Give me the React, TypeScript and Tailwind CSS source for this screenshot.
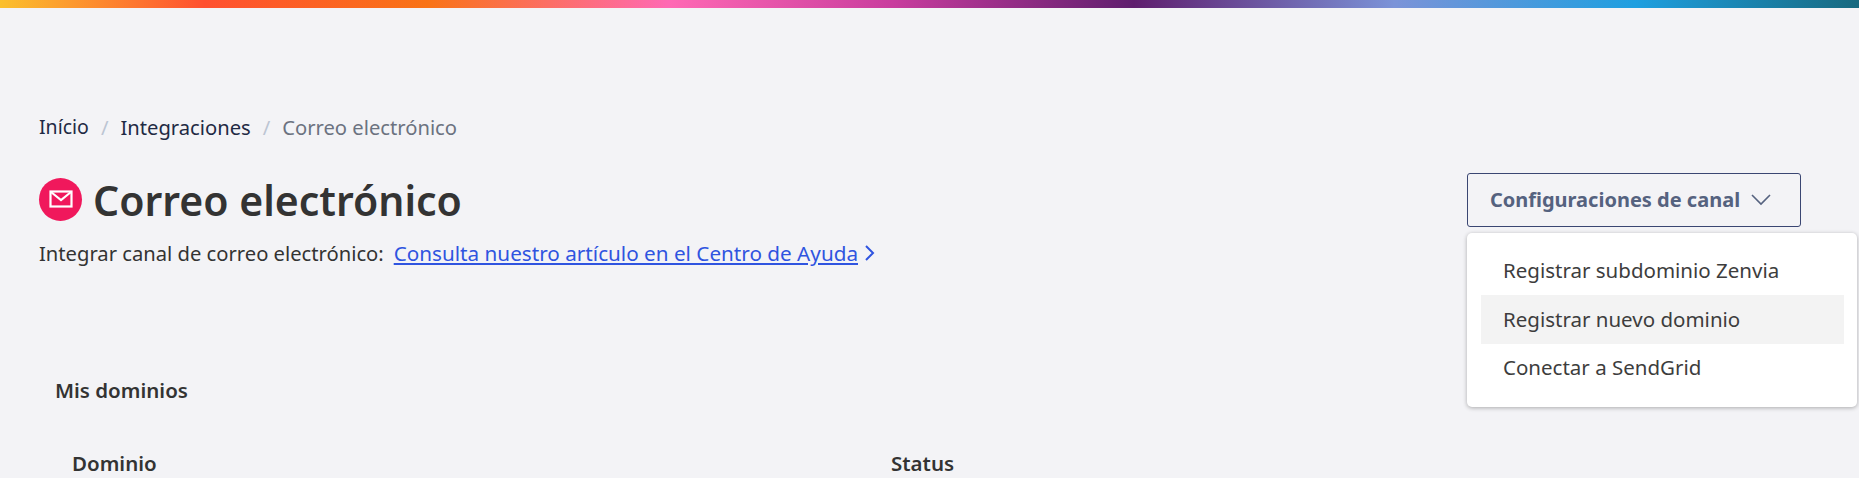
import React from "react";

function Mail() {
  return (
    <svg width="24" height="18" viewBox="0 0 24 18" fill="none" stroke="white" strokeWidth="2.2">
      <rect x="1.5" y="1.5" width="21" height="15" />
      <path d="M2 2l10 8 10-8" />
    </svg>
  );
}

export default function App() {
  return (
    <div className="h-[478px] w-[1859px] overflow-hidden bg-[#f3f3f6] font-['Noto_Sans',sans-serif] text-[#333]">
      <div className="h-2 bg-[linear-gradient(90deg,#fbc02d_0%,#ff5030_11%,#f97316_23%,#ff69b4_36%,#c93c9e_48%,#5f1e6e_61%,#7b93d8_75%,#1e9fe0_88%,#17697f_100%)]" />
      <div className="pl-[39px] pr-[3px] pt-[106px]">
        <nav className="flex h-[26px] items-center text-[20.2px] text-[#1f2a44]">
          <span className="text-[19.5px]">Início</span>
          <span className="mx-[12px] text-[#bcc5d3]">/</span>
          <span>Integraciones</span>
          <span className="mx-[12px] text-[#bcc5d3]">/</span>
          <span className="text-[#6b7280]">Correo electrónico</span>
        </nav>
        <div className="relative mt-[33px] flex items-start justify-between">
          <div>
            <div className="flex h-[52px] items-center gap-[11px]">
              <span className="flex h-[43px] w-[43px] items-center justify-center rounded-full bg-[#f0185c]">
                <Mail />
              </span>
              <h1 className="mt-[4px] text-[41px] font-semibold text-[#333]">Correo electrónico</h1>
            </div>
            <p className="mt-[15px] flex items-center text-[20.2px] leading-[26px]">
              Integrar canal de correo electrónico:
              <a className="ml-[10px] text-[20.7px] text-[#2f54e0] underline">Consulta nuestro artículo en el Centro de Ayuda</a>
              <svg className="ml-[6px]" width="12" height="18" viewBox="0 0 12 18" fill="none" stroke="#2f54e0" strokeWidth="2">
                <path d="M2 2l7 7-7 7" />
              </svg>
            </p>
          </div>
          <button className="mr-[55px] flex h-[54px] w-[334px] items-center justify-center gap-[11px] rounded-[3px] border border-[#3a4672] pr-[7px] text-[20px] font-bold text-[#55627f]">
            Configuraciones de canal
            <svg width="20" height="12" viewBox="0 0 20 12" fill="none" stroke="#55627f" strokeWidth="1.6">
              <path d="M1 1l9 9 9-9" />
            </svg>
          </button>
          <div className="absolute left-[1428px] top-[60px] h-[174px] w-[390px] rounded-[5px] bg-white pb-[16px] pl-[14px] pr-[13px] pt-[13px] text-[20.5px] text-[#3d3d3d] shadow-[0_1px_4px_rgba(0,0,0,0.3)]">
            <div className="flex h-[49px] items-center pl-[22px]">Registrar subdominio Zenvia</div>
            <div className="flex h-[49px] items-center bg-[#f3f3f3] pl-[22px]">Registrar nuevo dominio</div>
            <div className="flex h-[47px] items-center pl-[22px]">Conectar a SendGrid</div>
          </div>
        </div>
        <h2 className="mt-[111px] pl-[16px] text-[20.5px] font-semibold leading-[26px]">Mis dominios</h2>
        <div className="mt-[47px] flex pl-[33px] text-[20.5px] font-semibold leading-[26px]">
          <span className="w-[819px]">Dominio</span>
          <span>Status</span>
        </div>
      </div>
    </div>
  );
}
